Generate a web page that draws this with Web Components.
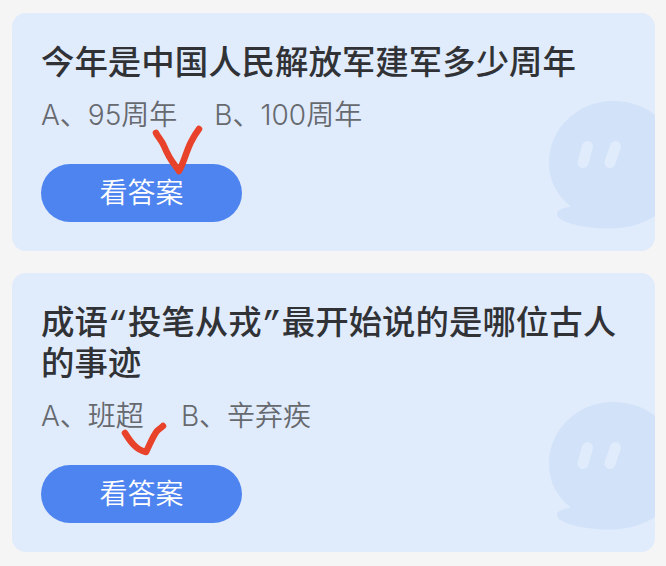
<!DOCTYPE html>
<html lang="zh-CN">
<head>
<meta charset="UTF-8">
<meta name="viewport" content="width=device-width, initial-scale=1.0">
<title>每日答题</title>
<style>
  * {
    box-sizing: border-box;
  }

  body {
    margin: 0;
    background-color: #f5f5f5;
    font-family: Inter, "Noto Sans CJK SC", sans-serif;
  }
</style>
</head>
<body>
  <quiz-list>
    <quiz-card>
      <span slot="title">今年是中国人民解放军建军多少周年</span>
      <quiz-option slot="options" letter="A" mark="long">95周年</quiz-option>
      <quiz-option slot="options" letter="B">100周年</quiz-option>
      <answer-button slot="action">看答案</answer-button>
    </quiz-card>
    <quiz-card>
      <span slot="title">成语“投笔从戎”最开始说的是哪位古人的事迹</span>
      <quiz-option slot="options" letter="A" mark="short">班超</quiz-option>
      <quiz-option slot="options" letter="B">辛弃疾</quiz-option>
      <answer-button slot="action">看答案</answer-button>
    </quiz-card>
  </quiz-list>

<script>
class QuizList extends HTMLElement {
  constructor() {
    super()
    this.attachShadow({ mode: "open" })
    this.shadowRoot.innerHTML = `
      <style>
      :host {
        display: flex;
        flex-direction: column;
        gap: 22px;
        padding: 13px 11px 14px 12px;
      }
      </style>
      <slot></slot>
    `
  }
}

class QuizMascot extends HTMLElement {
  constructor() {
    super()
    this.attachShadow({ mode: "open" })
    this.shadowRoot.innerHTML = `
      <style>
      :host {
        display: block;
        width: 106px;
        height: 128px;
      }
      svg {
        display: block;
      }
      </style>
      <svg width="106" height="128" viewBox="0 0 106 128">
        <path fill="#d2e3f9" d="M64 0C29 0 0 27 0 62C0 80 8 95 22 105.500C14 107 8 109 8 113C8 121 34 127.500 60 127.500C80 127.500 95 122 106 115V14C95 5 80 0 64 0Z"/>
        <path stroke="#e0ebfc" stroke-width="11" stroke-linecap="round" d="M38.500 45.500L34 61.500M66.500 45.500L61 61.500"/>
      </svg>
    `
  }
}

class QuizCard extends HTMLElement {
  constructor() {
    super()
    this.attachShadow({ mode: "open" })
  }

  getTemplate() {
    const template = document.createElement("template");
    template.innerHTML = `
      <div class="card">
        <h3><slot name="title"></slot></h3>
        <div class="card__options"><slot name="options"></slot></div>
        <slot name="action"></slot>
        <quiz-mascot></quiz-mascot>
      </div>
      ${this.getStyles()}
    `;
    return template;
  }

  getStyles() {
    return `
      <style>
      :host {
        display: block;
      }

      .card {
        position: relative;
        display: flex;
        flex-direction: column;
        align-items: flex-start;
        padding: 32px 29px 29px;
        border-radius: 14px;
        overflow: hidden;
        background-color: #e0ebfc;
      }

      /* the first family only serves the narrow quotes */
      .card h3 {
        margin: 0;
        font-family: "Liberation Mono", "Noto Sans CJK SC", sans-serif;
        font-size: 33.45px;
        font-weight: 500;
        line-height: 41px;
        color: #303236;
      }

      .card .card__options {
        display: flex;
        gap: 37px;
        height: 40px;
        margin: 8px 0 29.500px;
      }

      /* the mascot sits behind the bottom right corner */
      quiz-mascot {
        position: absolute;
        right: 0;
        bottom: 22px;
      }
      </style>
    `
  }

  connectedCallback() {
    this.shadowRoot.appendChild(this.getTemplate().content.cloneNode(true))
  }
}

const marks = {
  long: {
    left: 111, top: 33,
    path: "M4 6C6 10 10 14 12 19C15 26 18 32 22 37C24 40 26 42 27 44C32 35 34 25 39 15C41 11 44 6 47 2"
  },
  short: {
    left: 80, top: 29,
    path: "M4 9C9 17 15 26 25 28C29 20 32 12 36 7C38 5 40 4 42 2"
  }
}

class QuizOption extends HTMLElement {
  constructor() {
    super()
    this.attachShadow({ mode: "open" })
  }

  connectedCallback() {
    this.shadowRoot.innerHTML = `
      <style>
      :host {
        position: relative;
        display: block;
        font-size: 28px;
        font-weight: 350;
        line-height: 42px;
        white-space: nowrap;
        color: #66696e;
      }
      svg {
        position: absolute;
        z-index: 1;
        overflow: visible;
      }
      </style>
      <span>${this.getAttribute("letter")}、</span><slot></slot>
      ${this.getMark()}
    `
  }

  // hand drawn red tick
  getMark() {
    const mark = marks[this.getAttribute("mark")]
    if (!mark) return ""
    return `
      <svg style="left: ${mark.left}px; top: ${mark.top}px" width="50" height="46" fill="none">
        <path stroke="#e8432a" stroke-width="6.500" stroke-linecap="round" stroke-linejoin="round" d="${mark.path}"/>
      </svg>
    `
  }
}

class AnswerButton extends HTMLElement {
  constructor() {
    super()
    this.attachShadow({ mode: "open" })
    this.shadowRoot.innerHTML = `
      <style>
      :host {
        display: block;
      }
      button {
        display: block;
        width: 201px;
        height: 58.5px;
        padding: 0 0 3px;
        border: none;
        border-radius: 30px;
        cursor: pointer;
        color: white;
        font-family: "Noto Sans CJK SC", sans-serif;
        font-size: 28px;
        font-weight: 350;
        line-height: 55px;
        background-color: #4e84f0;
      }
      </style>
      <button><slot></slot></button>
    `
  }
}

customElements.define("quiz-list", QuizList)
customElements.define("quiz-mascot", QuizMascot)
customElements.define("quiz-card", QuizCard)
customElements.define("quiz-option", QuizOption)
customElements.define("answer-button", AnswerButton)
</script>
</body>
</html>
